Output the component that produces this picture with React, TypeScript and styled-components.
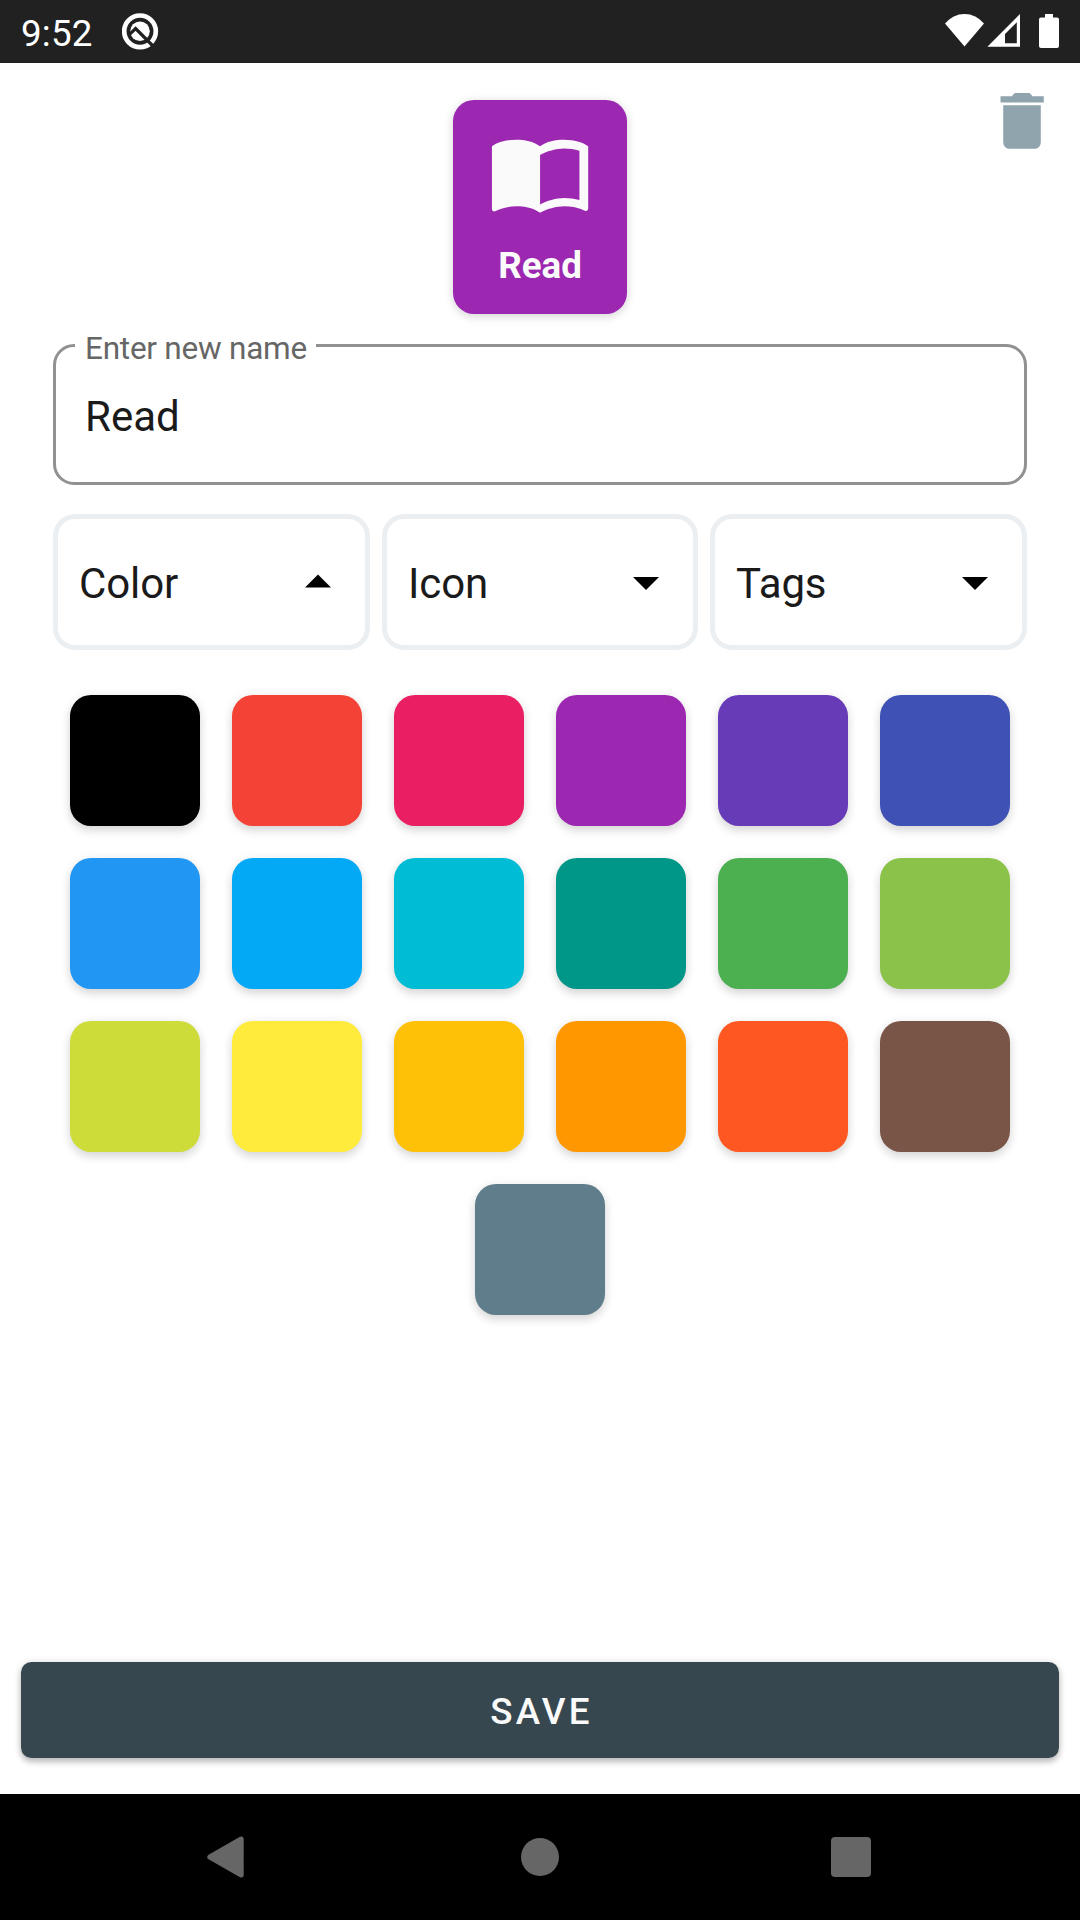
import React, { useState } from "react";
import styled, { createGlobalStyle } from "styled-components";

const GlobalStyle = createGlobalStyle`
  *, *::before, *::after { box-sizing: border-box; }
  body { margin: 0; background: #fff; font-family: Roboto, "Noto Sans", sans-serif; }
  button, input { font-family: inherit; border: 0; padding: 0; margin: 0; outline: 0; }
  svg { display: block; }
`;

const Screen = styled.div`
  display: flex;
  flex-direction: column;
  width: 1080px;
  height: 1920px;
  overflow: hidden;
  background: #fff;
`;

const StatusBar = styled.header`
  display: flex;
  align-items: flex-start;
  height: 63px;
  padding: 0 20px 0 21px;
  background: #212121;
  color: #fff;
`;

const Clock = styled.span`
  width: 101px;
  padding-top: 12px;
  font-size: 36.75px;
  line-height: 44px;
  letter-spacing: 0.2px;
`;

const StatusIcons = styled.div`
  display: flex;
  margin-left: auto;
`;

const Main = styled.main`
  flex: 1;
  display: flex;
  flex-direction: column;
  min-height: 0;
`;

const Header = styled.div`
  display: grid;
  grid-template-columns: 1fr 174px 1fr;
  padding: 37px 36px 0;
  height: 281px;
`;

const PreviewCard = styled.div`
  grid-column: 2;
  display: flex;
  flex-direction: column;
  align-items: center;
  height: 214px;
  padding-top: 20px;
  border-radius: 21px;
  background: #9c27b0;
  color: #fafafa;
  box-shadow: 0 3px 10px rgba(0, 0, 0, 0.13), 0 0 12px rgba(0, 0, 0, 0.05);
`;

const CardLabel = styled.span`
  margin-top: 19px;
  font-size: 36.75px;
  line-height: 44px;
  font-weight: 700;
`;

const DeleteButton = styled.button`
  justify-self: end;
  align-self: start;
  margin-top: -7px;
  background: none;
`;

const Field = styled.label`
  position: relative;
  display: block;
  margin: 0 53px;
  height: 141px;
  border: 3px solid #919191;
  border-radius: 21px;
`;

const FieldLabel = styled.span`
  position: absolute;
  top: -17px;
  left: 19px;
  width: 241px;
  padding-left: 10px;
  background: #fff;
  color: #666;
  font-size: 31.5px;
  line-height: 38px;
  letter-spacing: -0.24px;
  white-space: nowrap;
`;

const NameInput = styled.input`
  width: 100%;
  height: 100%;
  padding: 3px 29px 0;
  background: transparent;
  color: #1a1a1a;
  font-size: 42px;
`;

const Tabs = styled.div`
  display: grid;
  grid-template-columns: 317px 316px 317px;
  gap: 12px;
  margin: 29px 53px 0;
`;

const Tab = styled.button`
  display: flex;
  align-items: center;
  justify-content: space-between;
  height: 136px;
  padding: 2px 33px 0 21px;
  border: 5px solid #eceff1;
  border-radius: 22px;
  background: #fff;
  color: #1a1a1a;
  font-size: 42px;
  line-height: 50px;
`;

const TabLabel = styled.span`
  padding-top: 2px;
  letter-spacing: -0.1px;
`;

const Palette = styled.div`
  display: flex;
  flex-wrap: wrap;
  justify-content: center;
  gap: 32px;
  margin: 45px 70px 0;
`;

const Swatch = styled.button<{ $color: string }>`
  width: 130px;
  height: 131px;
  border-radius: 21px;
  background: ${(p) => p.$color};
  box-shadow: 0 5px 10px rgba(0, 0, 0, 0.13), 0 0 12px rgba(0, 0, 0, 0.06);
`;

const SaveButton = styled.button`
  height: 96px;
  margin: auto 21px 36px;
  padding: 3px 0 0 3px;
  border-radius: 10.5px;
  background: #37474f;
  color: #fafafa;
  font-size: 36.75px;
  font-weight: 500;
  letter-spacing: 3.28px;
  box-shadow: 0 4px 6px rgba(0, 0, 0, 0.24), 0 0 8px rgba(0, 0, 0, 0.1);
`;

const NavBar = styled.nav`
  display: grid;
  grid-template-columns: 42px 44px 44px;
  justify-content: space-between;
  height: 126px;
  padding: 41px 207px 0 205px;
  background: #000;
`;

const HomeButton = styled.button`
  margin-left: 2px;
  height: 44px;
  background: none;
`;

const COLORS = [
  "#000000", "#f44336", "#e91e63", "#9c27b0", "#673ab7", "#3f51b5",
  "#2196f3", "#03a9f4", "#00bcd4", "#009688", "#4caf50", "#8bc34a",
  "#cddc39", "#ffeb3b", "#ffc107", "#ff9800", "#ff5722", "#795548",
  "#607d8b",
];

const Caret = ({ up }: { up?: boolean }) => (
  <svg width="28" height="20" viewBox="0 0 28 20">
    <path d={up ? "M1 14.5 14 1.5l13 13z" : "M1 4h26L14 17z"} fill="#000" />
  </svg>
);

const NotificationIcon = () => (
  <svg width="38" height="63" viewBox="0 0 38 63" fill="none">
    <circle cx="18" cy="31.3" r="15.8" stroke="#fff" strokeWidth="4.7" />
    <circle cx="18" cy="31.3" r="9.8" fill="#fff" />
    <path d="M7 34.8 13.6 28.6 31.5 46.5" stroke="#212121" strokeWidth="3.2" />
  </svg>
);

const SystemIcons = () => (
  <svg width="116" height="63" viewBox="944 0 116 63">
    <path d="M945 23.5Q953 14 964.5 14T984 23.5L964.5 46.5z" fill="#fff" />
    <path d="M1020 14v32.7h-32.6zM1016.8 22.2 1005 34v9.3h11.8z" fill="#fff" fillRule="evenodd" />
    <path d="M1045 14h8v3.5h4a2 2 0 0 1 2 2V46a2 2 0 0 1-2 2h-16a2 2 0 0 1-2-2V19.5a2 2 0 0 1 2-2h4z" fill="#fff" />
  </svg>
);

const TrashIcon = () => (
  <svg width="44" height="56" viewBox="0 0 44 56" fill="#90a4ae">
    <path d="M.5 3.2h11.3L14.8 0h14.8l3 3.2h11.2v6.3H.5z" />
    <path d="M3.2 12.3h37.6V49.5a6.3 6.3 0 0 1-6.3 6.3h-25a6.3 6.3 0 0 1-6.3-6.3z" />
  </svg>
);

const BookIcon = () => (
  <svg width="105" height="105" viewBox="0.1 0 24 24" fill="currentColor">
    <path d="M21 5c-1.11-.35-2.33-.5-3.5-.5-1.95 0-4.05.4-5.5 1.5-1.45-1.1-3.55-1.5-5.5-1.5S2.45 4.9 1 6v14.4c0 .25.25.5.5.5.1 0 .15-.05.25-.05C3.1 20.15 5.05 19.7 6.5 19.7c1.95 0 4.05.4 5.5 1.5 1.35-.85 3.8-1.5 5.5-1.5 1.65 0 3.35.3 4.75 1.05.1.05.15.05.25.05.25 0 .5-.25.5-.5V6c-.6-.45-1.25-.75-2-1zm0 13.3c-1.1-.35-2.3-.5-3.5-.5-1.7 0-4.15.65-5.5 1.5V8c1.35-.85 3.8-1.5 5.5-1.5 1.2 0 2.4.15 3.5.5v11.3z" />
  </svg>
);

export default function App() {
  const [name, setName] = useState("Read");
  return (
    <Screen>
      <GlobalStyle />
      <StatusBar>
        <Clock>9:52</Clock>
        <NotificationIcon />
        <StatusIcons>
          <SystemIcons />
        </StatusIcons>
      </StatusBar>
      <Main>
        <Header>
          <PreviewCard>
            <BookIcon />
            <CardLabel>{name}</CardLabel>
          </PreviewCard>
          <DeleteButton>
            <TrashIcon />
          </DeleteButton>
        </Header>
        <Field>
          <FieldLabel>Enter new name</FieldLabel>
          <NameInput value={name} onChange={(e) => setName(e.target.value)} />
        </Field>
        <Tabs>
          <Tab><TabLabel>Color</TabLabel><Caret up /></Tab>
          <Tab><TabLabel>Icon</TabLabel><Caret /></Tab>
          <Tab><TabLabel>Tags</TabLabel><Caret /></Tab>
        </Tabs>
        <Palette>
          {COLORS.map((c) => (
            <Swatch key={c} $color={c} />
          ))}
        </Palette>
        <SaveButton>SAVE</SaveButton>
      </Main>
      <NavBar>
        <svg width="42" height="44" viewBox="0 0 42 44">
          <path d="M4.8 22 36.2 4v36z" fill="#666" stroke="#666" strokeWidth="5" strokeLinejoin="round" />
        </svg>
        <HomeButton>
          <svg width="44" height="44" viewBox="0 0 44 44">
            <circle cx="22" cy="22" r="19" fill="#666" />
          </svg>
        </HomeButton>
        <svg width="44" height="44" viewBox="0 0 44 44">
          <rect x="2" y="2" width="40" height="40" rx="4" fill="#666" />
        </svg>
      </NavBar>
    </Screen>
  );
}
